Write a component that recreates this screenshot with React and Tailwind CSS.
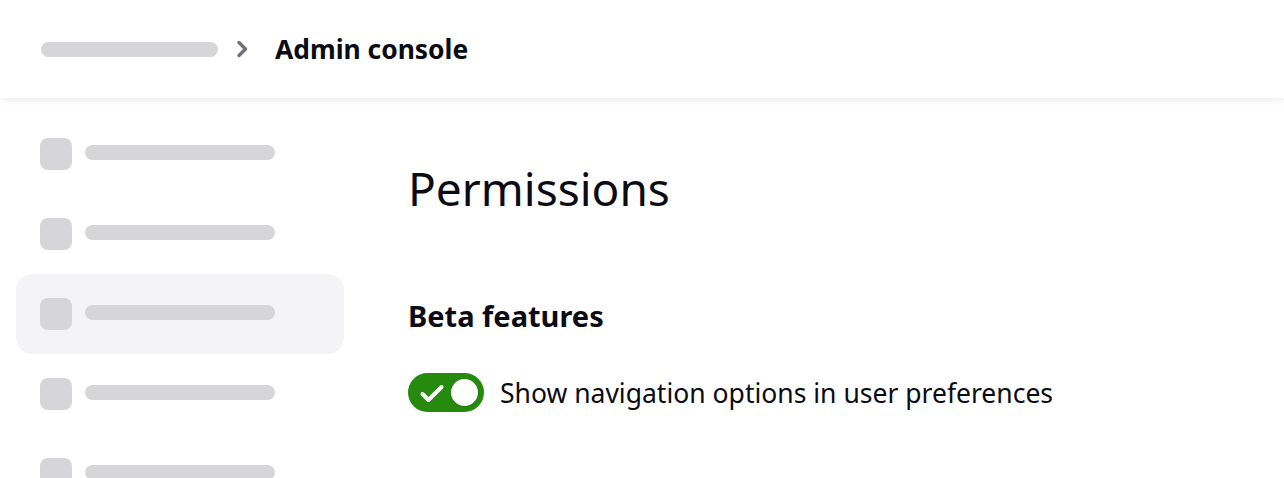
import React, { useState } from 'react'

const font = { fontFamily: '"Noto Sans", Lato, sans-serif' }

const SideItem = ({ active }) => (
    <div className={`flex items-center h-20 px-6 rounded-2xl ${active ? 'bg-[#f4f4f6]' : ''}`}>
        <div className="w-8 h-8 rounded-lg bg-[#d6d6d8]" />
        <div className="ml-[13px] -mt-[3px] w-[190px] h-[15px] rounded-full bg-[#d6d6d8]" />
    </div>
)

export default function App() {
    const [enabled, setEnabled] = useState(true)

    return (
        <div className="w-[1284px] h-[478px] overflow-hidden bg-white text-[#0b0b14]" style={font}>
            {/* Header */}
            <header className="relative z-10 h-[98px] flex items-center px-[41px] bg-white shadow-[0_2px_8px_rgba(0,0,0,0.08)]">
                <div className="w-[177px] h-[15px] rounded-full bg-[#d6d6d8]" />
                <svg className="ml-[16px]" width="18" height="20" viewBox="0 0 18 20" fill="none">
                    <path d="M5 3.5l6.5 6.5L5 16.5" stroke="#6f6f78" strokeWidth="3.4" strokeLinecap="round" strokeLinejoin="round" />
                </svg>
                <span className="ml-[23px] text-[26.4px] font-bold leading-none">Admin console</span>
            </header>

            <div className="flex">
                {/* Sidebar */}
                <nav className="w-[328px] ml-4 pt-[16px] flex flex-col">
                    <SideItem />
                    <SideItem />
                    <SideItem active />
                    <SideItem />
                    <SideItem />
                </nav>

                {/* Main */}
                <main className="ml-16 pt-[60px]">
                    <h1 className="text-[46px] leading-[60px] font-normal">Permissions</h1>
                    <h2 className="mt-[80px] text-[29px] leading-9 font-bold">Beta features</h2>
                    <label className="mt-[39px] flex items-center gap-4 cursor-pointer">
                        <button
                            onClick={() => setEnabled(!enabled)}
                            className={`relative w-[76px] h-[39px] rounded-full flex items-center ${enabled ? 'bg-[#268a0e]' : 'bg-gray-400'}`}
                        >
                            <svg className="absolute left-[10px]" width="28" height="28" viewBox="0 0 28 28" fill="none">
                                <path d="M4.5 15l6 6L23.5 8" stroke="white" strokeWidth="4" strokeLinecap="round" strokeLinejoin="round" />
                            </svg>
                            <span className={`absolute w-[27px] h-[27px] rounded-full bg-white shadow ${enabled ? 'left-[43px]' : 'left-[6px]'}`} />
                        </button>
                        <span className="text-[26.5px] leading-9">Show navigation options in user preferences</span>
                    </label>
                </main>
            </div>
        </div>
    )
}
